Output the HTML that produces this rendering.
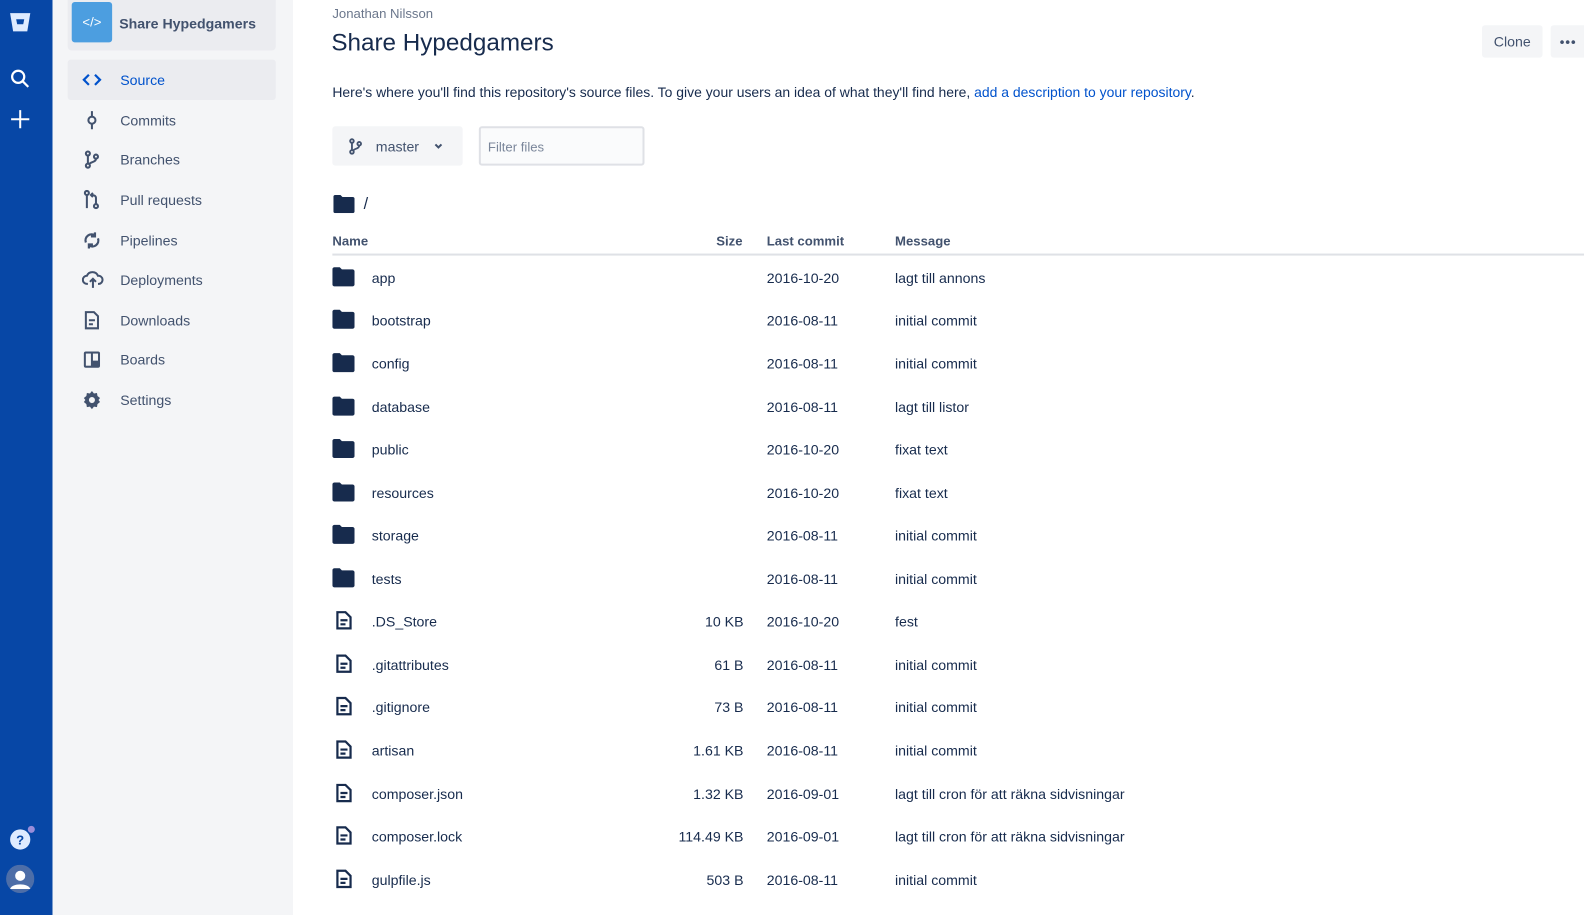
<!DOCTYPE html>
<html><head><meta charset="utf-8"><style>
*{margin:0;padding:0;box-sizing:border-box}
html,body{width:1584px;height:906px;overflow:hidden}
body{font-family:"Liberation Sans",sans-serif;color:#172b4d;background:#fff;font-size:14px}
#w{position:absolute;left:0;top:0;width:1584px;height:906px;transform:scale(1.0102);transform-origin:0 0}
.gb{position:absolute;left:0;top:0;width:52px;height:906px;background:#0747a6}
.sb{position:absolute;left:52px;top:0;width:238px;height:906px;background:#f4f5f7}
.proj{position:absolute;left:15px;top:-6px;width:206px;height:56px;background:#ebecf0;border-radius:4px}
.pic{position:absolute;left:4px;top:8px;width:40px;height:40px;background:#4c9ee0;border-radius:3px;color:#fff;font-size:13px;text-align:center;line-height:40px}
.pname{position:absolute;left:51px;top:21px;font-size:14px;color:#42526e;font-weight:bold}
.nav{position:absolute;left:15px;width:206px;height:40px;border-radius:3px}
.nav span{position:absolute;left:52px;top:12px;color:#42526e;font-size:14px}
.nav svg{position:absolute;left:14px;top:10px}
.act{background:#ebecf0}.act span{color:#0052cc}
.t{position:absolute;white-space:nowrap}
.row{position:absolute;left:329px;width:1255px;height:20px;font-size:14px;color:#172b4d}
.row .n{position:absolute;left:39px;top:0}
.row .s{position:absolute;right:848px;top:0;text-align:right}
.row .d{position:absolute;left:430px;top:0}
.row .m{position:absolute;left:557px;top:0}
.row svg{position:absolute;left:0;top:-3px}
</style></head><body><div id="w">
<div class="gb">
<svg style="position:absolute;left:8px;top:10px" width="24" height="24" viewBox="0 0 24 24"><path d="M2 3h20l-3 18H5z" fill="#deebff"/><path d="M8 9h8l-1 5H9z" fill="#0747a6"/></svg>
<svg style="position:absolute;left:9px;top:67px" width="22" height="22" viewBox="0 0 22 22" fill="none" stroke="#fff" stroke-width="2.2"><circle cx="9" cy="9" r="6"/><path d="M13.5 13.5L19 19"/></svg>
<svg style="position:absolute;left:9px;top:107px" width="22" height="22" viewBox="0 0 22 22" stroke="#fff" stroke-width="2"><path d="M11 2v18M2 11h18"/></svg>
<svg style="position:absolute;left:8px;top:816px" width="28" height="28" viewBox="0 0 28 28"><circle cx="12" cy="15" r="10" fill="#deebff"/><text x="12" y="20" font-size="13" font-weight="bold" fill="#0747a6" text-anchor="middle" font-family="Liberation Sans">?</text><circle cx="23" cy="5" r="3.5" fill="#998dd9"/></svg>
<svg style="position:absolute;left:6px;top:856px" width="28" height="28" viewBox="0 0 28 28"><circle cx="14" cy="14" r="14" fill="#4d6ea8"/><circle cx="14" cy="11" r="5" fill="#fff"/><path d="M4 24c2-6 18-6 20 0z" fill="#fff"/></svg>
</div>
<div class="sb">
<div class="proj"><div class="pic">&lt;/&gt;</div><div class="pname">Share Hypedgamers</div></div>
<div class="nav act" style="top:59px"><svg width="20" height="20" viewBox="0 0 20 20" fill="none" stroke="#0052cc" stroke-width="2.2"><path d="M7 5l-5 5 5 5M13 5l5 5-5 5"/></svg><span>Source</span></div>
<div class="nav" style="top:99px"><svg width="20" height="20" viewBox="0 0 20 20" fill="none" stroke="#42526e" stroke-width="2"><path d="M10 1v5M10 14v5"/><circle cx="10" cy="10" r="3.5"/></svg><span>Commits</span></div>
<div class="nav" style="top:138px"><svg width="20" height="20" viewBox="0 0 20 20" fill="none" stroke="#42526e" stroke-width="2"><circle cx="6" cy="4" r="2"/><circle cx="6" cy="16" r="2"/><circle cx="14" cy="7" r="2"/><path d="M6 6v8M14 9c0 4-6 3-7 6"/></svg><span>Branches</span></div>
<div class="nav" style="top:178px"><svg width="20" height="20" viewBox="0 0 20 20" fill="none" stroke="#42526e" stroke-width="2"><circle cx="5" cy="3" r="2"/><path d="M5 5v13"/><circle cx="14" cy="16" r="2"/><path d="M14 14V8c0-2-2-3-4-3M11 3l-2 2 2 2"/></svg><span>Pull requests</span></div>
<div class="nav" style="top:218px"><svg width="20" height="20" viewBox="0 0 20 20" fill="none" stroke="#42526e" stroke-width="2.2"><path d="M4 12a6 6 0 0 1 9-7M16 8a6 6 0 0 1-9 7M13 2v4h-4M7 18v-4h4"/></svg><span>Pipelines</span></div>
<div class="nav" style="top:257px"><svg width="22" height="20" viewBox="0 0 22 20" fill="none" stroke="#42526e" stroke-width="2"><path d="M6 14H5a4 4 0 0 1 0-8 6 6 0 0 1 11 0 4 4 0 0 1 1 8h-1M11 18V9M8 12l3-3 3 3"/></svg><span>Deployments</span></div>
<div class="nav" style="top:297px"><svg width="20" height="20" viewBox="0 0 20 20" fill="none" stroke="#42526e" stroke-width="2"><path d="M4 2h8l4 4v12H4zM7 10h6M7 14h4"/></svg><span>Downloads</span></div>
<div class="nav" style="top:336px"><svg width="20" height="20" viewBox="0 0 20 20"><rect x="2" y="2" width="16" height="16" rx="2" fill="#42526e"/><rect x="4" y="4" width="5" height="12" fill="#f4f5f7"/><rect x="11" y="4" width="5" height="7" fill="#f4f5f7"/></svg><span>Boards</span></div>
<div class="nav" style="top:376px"><svg width="20" height="20" viewBox="0 0 20 20"><path d="M10 1l2 2.5 3-.5.5 3L18 8l-1.5 2L18 12l-2.5 2-.5 3-3-.5L10 19l-2-2.5-3 .5-.5-3L2 12l1.5-2L2 8l2.5-2 .5-3 3 .5z" fill="#42526e"/><circle cx="10" cy="10" r="3" fill="#f4f5f7"/></svg><span>Settings</span></div>
</div>
<div class="t" style="left:329px;top:6px;font-size:13px;color:#6b778c">Jonathan Nilsson</div>
<div class="t" style="left:328px;top:29px;font-size:24px;color:#172b4d">Share Hypedgamers</div>
<div style="position:absolute;left:1467px;top:25px;width:60px;height:32px;background:#f4f5f7;border-radius:3px;color:#42526e;text-align:center;line-height:32px;font-size:14px">Clone</div>
<div style="position:absolute;left:1535px;top:25px;width:49px;height:32px;background:#f4f5f7;border-radius:3px;color:#42526e;padding-left:9px;line-height:34px;font-size:13px;font-weight:bold;letter-spacing:1px">•••</div>
<div class="t" style="left:329px;top:84px;font-size:13.8px;color:#172b4d">Here's where you'll find this repository's source files. To give your users an idea of what they'll find here, <span style="color:#0052cc">add a description to your repository</span>.</div>
<div style="position:absolute;left:329px;top:125px;width:129px;height:39px;background:#f4f5f7;border-radius:3px">
<svg style="position:absolute;left:14px;top:10px" width="18" height="20" viewBox="0 0 20 20" fill="none" stroke="#42526e" stroke-width="2"><circle cx="6" cy="4" r="2"/><circle cx="6" cy="16" r="2"/><circle cx="14" cy="7" r="2"/><path d="M6 6v8M14 9c0 4-6 3-7 6"/></svg>
<span style="position:absolute;left:43px;top:12px;color:#42526e">master</span>
<svg style="position:absolute;left:100px;top:15px" width="10" height="10" viewBox="0 0 10 10" fill="none" stroke="#42526e" stroke-width="2"><path d="M2 3l3 3 3-3"/></svg></div>
<div style="position:absolute;left:474px;top:125px;width:164px;height:39px;border:2px solid #dfe1e6;border-radius:3px;background:#fafbfc;color:#7a869a;font-size:13px;padding:11px 0 0 7px">Filter files</div>
<svg style="position:absolute;left:330px;top:193px" width="21" height="18" viewBox="0 0 21 18"><path d="M0 2a2 2 0 0 1 2-2h5l2 2h10a2 2 0 0 1 2 2v12a2 2 0 0 1-2 2H2a2 2 0 0 1-2-2z" fill="#172b4d"/></svg>
<div class="t" style="left:360px;top:194px;font-size:16px">/</div>
<div class="t" style="left:329px;top:231px;font-weight:bold;color:#42526e;font-size:13px">Name</div>
<div class="t" style="left:709px;top:231px;font-weight:bold;color:#42526e;font-size:13px">Size</div>
<div class="t" style="left:759px;top:231px;font-weight:bold;color:#42526e;font-size:13px">Last commit</div>
<div class="t" style="left:886px;top:231px;font-weight:bold;color:#42526e;font-size:13px">Message</div>
<div style="position:absolute;left:329px;top:251px;width:1255px;height:2px;background:#dfe1e6"></div>
<div class="row" style="top:267px"><svg width="22" height="20" viewBox="0 0 21 18"><path d="M0 2a2 2 0 0 1 2-2h5l2 2h10a2 2 0 0 1 2 2v12a2 2 0 0 1-2 2H2a2 2 0 0 1-2-2z" fill="#172b4d"/></svg><span class="n">app</span><span class="d">2016-10-20</span><span class="m">lagt till annons</span></div>
<div class="row" style="top:309px"><svg width="22" height="20" viewBox="0 0 21 18"><path d="M0 2a2 2 0 0 1 2-2h5l2 2h10a2 2 0 0 1 2 2v12a2 2 0 0 1-2 2H2a2 2 0 0 1-2-2z" fill="#172b4d"/></svg><span class="n">bootstrap</span><span class="d">2016-08-11</span><span class="m">initial commit</span></div>
<div class="row" style="top:352px"><svg width="22" height="20" viewBox="0 0 21 18"><path d="M0 2a2 2 0 0 1 2-2h5l2 2h10a2 2 0 0 1 2 2v12a2 2 0 0 1-2 2H2a2 2 0 0 1-2-2z" fill="#172b4d"/></svg><span class="n">config</span><span class="d">2016-08-11</span><span class="m">initial commit</span></div>
<div class="row" style="top:395px"><svg width="22" height="20" viewBox="0 0 21 18"><path d="M0 2a2 2 0 0 1 2-2h5l2 2h10a2 2 0 0 1 2 2v12a2 2 0 0 1-2 2H2a2 2 0 0 1-2-2z" fill="#172b4d"/></svg><span class="n">database</span><span class="d">2016-08-11</span><span class="m">lagt till listor</span></div>
<div class="row" style="top:437px"><svg width="22" height="20" viewBox="0 0 21 18"><path d="M0 2a2 2 0 0 1 2-2h5l2 2h10a2 2 0 0 1 2 2v12a2 2 0 0 1-2 2H2a2 2 0 0 1-2-2z" fill="#172b4d"/></svg><span class="n">public</span><span class="d">2016-10-20</span><span class="m">fixat text</span></div>
<div class="row" style="top:480px"><svg width="22" height="20" viewBox="0 0 21 18"><path d="M0 2a2 2 0 0 1 2-2h5l2 2h10a2 2 0 0 1 2 2v12a2 2 0 0 1-2 2H2a2 2 0 0 1-2-2z" fill="#172b4d"/></svg><span class="n">resources</span><span class="d">2016-10-20</span><span class="m">fixat text</span></div>
<div class="row" style="top:522px"><svg width="22" height="20" viewBox="0 0 21 18"><path d="M0 2a2 2 0 0 1 2-2h5l2 2h10a2 2 0 0 1 2 2v12a2 2 0 0 1-2 2H2a2 2 0 0 1-2-2z" fill="#172b4d"/></svg><span class="n">storage</span><span class="d">2016-08-11</span><span class="m">initial commit</span></div>
<div class="row" style="top:565px"><svg width="22" height="20" viewBox="0 0 21 18"><path d="M0 2a2 2 0 0 1 2-2h5l2 2h10a2 2 0 0 1 2 2v12a2 2 0 0 1-2 2H2a2 2 0 0 1-2-2z" fill="#172b4d"/></svg><span class="n">tests</span><span class="d">2016-08-11</span><span class="m">initial commit</span></div>
<div class="row" style="top:607px"><svg style="left:3px" width="18" height="20" viewBox="0 0 18 20" fill="none" stroke="#172b4d" stroke-width="2.2"><path d="M2 2h8l5 5v11H2zM5 10h7M5 14h5"/></svg><span class="n">.DS_Store</span><span class="s">10 KB</span><span class="d">2016-10-20</span><span class="m">fest</span></div>
<div class="row" style="top:650px"><svg style="left:3px" width="18" height="20" viewBox="0 0 18 20" fill="none" stroke="#172b4d" stroke-width="2.2"><path d="M2 2h8l5 5v11H2zM5 10h7M5 14h5"/></svg><span class="n">.gitattributes</span><span class="s">61 B</span><span class="d">2016-08-11</span><span class="m">initial commit</span></div>
<div class="row" style="top:692px"><svg style="left:3px" width="18" height="20" viewBox="0 0 18 20" fill="none" stroke="#172b4d" stroke-width="2.2"><path d="M2 2h8l5 5v11H2zM5 10h7M5 14h5"/></svg><span class="n">.gitignore</span><span class="s">73 B</span><span class="d">2016-08-11</span><span class="m">initial commit</span></div>
<div class="row" style="top:735px"><svg style="left:3px" width="18" height="20" viewBox="0 0 18 20" fill="none" stroke="#172b4d" stroke-width="2.2"><path d="M2 2h8l5 5v11H2zM5 10h7M5 14h5"/></svg><span class="n">artisan</span><span class="s">1.61 KB</span><span class="d">2016-08-11</span><span class="m">initial commit</span></div>
<div class="row" style="top:778px"><svg style="left:3px" width="18" height="20" viewBox="0 0 18 20" fill="none" stroke="#172b4d" stroke-width="2.2"><path d="M2 2h8l5 5v11H2zM5 10h7M5 14h5"/></svg><span class="n">composer.json</span><span class="s">1.32 KB</span><span class="d">2016-09-01</span><span class="m">lagt till cron för att räkna sidvisningar</span></div>
<div class="row" style="top:820px"><svg style="left:3px" width="18" height="20" viewBox="0 0 18 20" fill="none" stroke="#172b4d" stroke-width="2.2"><path d="M2 2h8l5 5v11H2zM5 10h7M5 14h5"/></svg><span class="n">composer.lock</span><span class="s">114.49 KB</span><span class="d">2016-09-01</span><span class="m">lagt till cron för att räkna sidvisningar</span></div>
<div class="row" style="top:863px"><svg style="left:3px" width="18" height="20" viewBox="0 0 18 20" fill="none" stroke="#172b4d" stroke-width="2.2"><path d="M2 2h8l5 5v11H2zM5 10h7M5 14h5"/></svg><span class="n">gulpfile.js</span><span class="s">503 B</span><span class="d">2016-08-11</span><span class="m">initial commit</span></div>
</div></body></html>
